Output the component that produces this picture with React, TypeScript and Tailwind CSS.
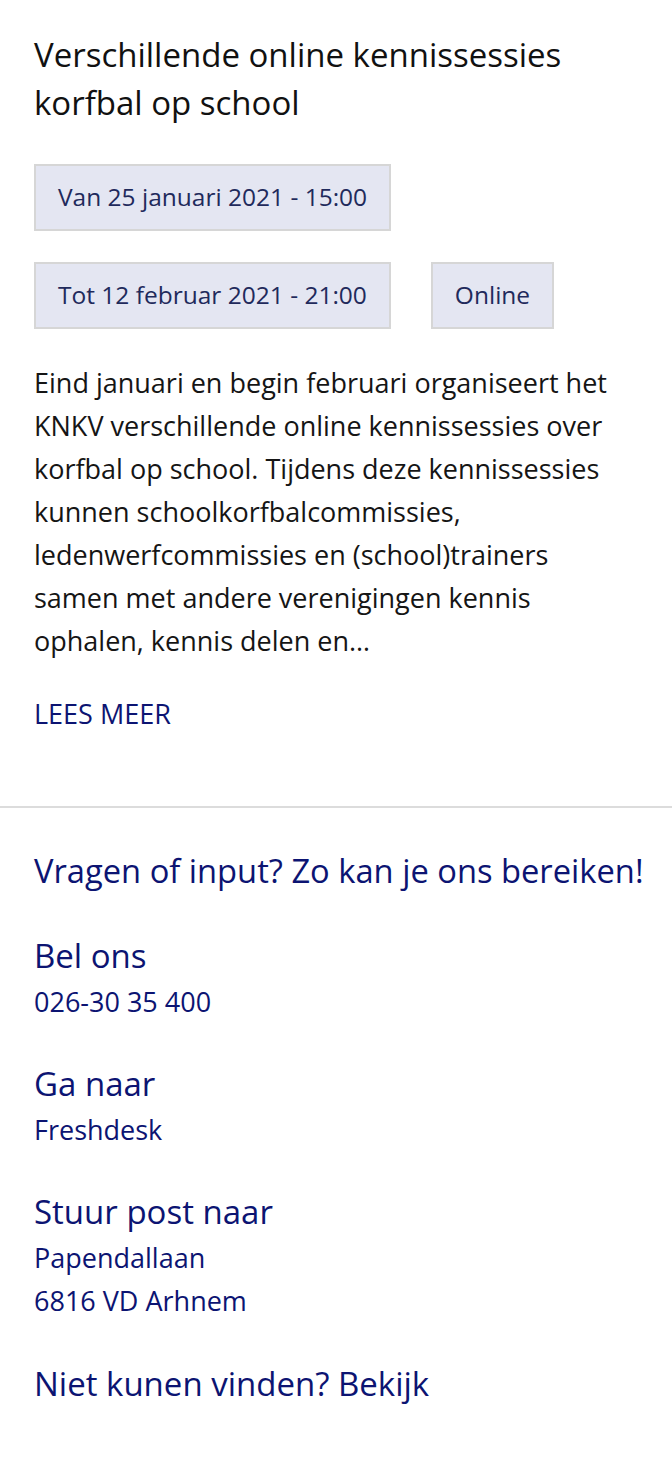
export default function App() {
  const pills = ['Van 25 januari 2021 - 15:00', 'Tot 12 februar 2021 - 21:00', 'Online'];

  const contacts = [
    { title: 'Bel ons', lines: ['026-30 35 400'] },
    { title: 'Ga naar', lines: ['Freshdesk'] },
    { title: 'Stuur post naar', lines: ['Papendallaan', '6816 VD Arhnem'] },
  ];

  return (
    <div className="min-h-screen bg-white font-['Open_Sans',sans-serif]">
      <section className="px-[34px] pt-[31px] pb-[71px]">
        <h1 className="text-[33px] leading-[48px] font-normal text-[#111111]">
          Verschillende online kennissessies korfbal op school
        </h1>

        <div className="mt-[37px] flex flex-wrap gap-x-[40px] gap-y-[31px]">
          {pills.map((p) => (
            <span
              key={p}
              className="flex h-[67px] items-center border-2 border-[#d6d6d6] bg-[#e4e6f2] px-[22px] text-[24.5px] text-[#1f2a5c]"
            >
              {p}
            </span>
          ))}
        </div>

        <p className="mt-[32px] text-[27px] leading-[43px] text-[#151515]">
          Eind januari en begin februari organiseert het KNKV verschillende online kennissessies over korfbal op
          school. Tijdens deze kennissessies kunnen schoolkorfbalcommissies, ledenwerfcommissies en (school)trainers
          samen met andere verenigingen kennis ophalen, kennis delen en…
        </p>

        <a href="#" className="mt-[30px] block text-[27px] leading-[43px] uppercase text-[#0c1472]">
          Lees meer
        </a>
      </section>

      <div className="h-[2px] bg-[#dcdcdc]" />

      <footer className="px-[34px] pt-[39px] pb-[60px] text-[#0c1472]">
        <h2 className="whitespace-nowrap text-[32.7px] leading-[48px]">Vragen of input? Zo kan je ons bereiken!</h2>

        {contacts.map((c) => (
          <div key={c.title} className="mt-[37px]">
            <h3 className="text-[33px] leading-[48px]">{c.title}</h3>
            {c.lines.map((l) => (
              <p key={l} className="text-[27px] leading-[43px]">
                {l}
              </p>
            ))}
          </div>
        ))}

        <h3 className="mt-[38px] text-[33px] leading-[48px]">Niet kunen vinden? Bekijk</h3>
      </footer>
    </div>
  );
}
